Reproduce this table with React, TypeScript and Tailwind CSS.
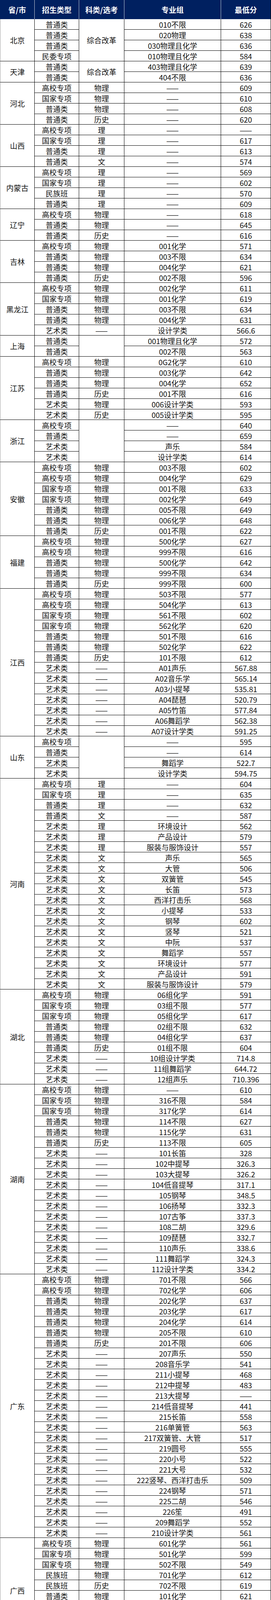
import React from 'react';

type Group = { p: string; merged?: string; rows: string[] };

// rows: "type|subject|group|score" or, when the subject column is merged, "type|group|score"
const data: Group[] = [
  { p: '北京', merged: '综合改革', rows: ['普通类|010不限|626', '普通类|020物理|638', '普通类|030物理且化学|636', '民委专项|010物理且化学|584'] },
  { p: '天津', merged: '综合改革', rows: ['普通类|403物理且化学|639', '普通类|404不限|636'] },
  { p: '河北', rows: ['高校专项|物理|——|609', '国家专项|物理|——|610', '普通类|物理|——|608', '普通类|历史|——|620'] },
  { p: '山西', rows: ['高校专项|理|——|——', '国家专项|理|——|617', '普通类|理|——|613', '普通类|文|——|574'] },
  { p: '内蒙古', rows: ['高校专项|理|——|569', '国家专项|理|——|602', '民族班|理|——|570', '普通类|理|——|609'] },
  { p: '辽宁', rows: ['高校专项|物理|——|618', '普通类|物理|——|645', '普通类|历史|——|616'] },
  { p: '吉林', rows: ['高校专项|物理|001化学|571', '普通类|物理|003不限|634', '普通类|物理|004化学|621', '普通类|历史|002不限|596'] },
  { p: '黑龙江', rows: ['高校专项|物理|002化学|611', '国家专项|物理|001化学|619', '普通类|物理|003不限|634', '普通类|物理|004化学|631', '艺术类|——|设计学类|566.6'] },
  { p: '上海', merged: '', rows: ['普通类|001物理且化学|572', '普通类|002不限|563'] },
  { p: '江苏', rows: ['高校专项|物理|0G2化学|610', '普通类|物理|003化学|642', '普通类|物理|004化学|652', '普通类|历史|001不限|616', '艺术类|物理|006设计学类|593', '艺术类|历史|005设计学类|595'] },
  { p: '浙江', merged: '', rows: ['高校专项|——|640', '普通类|——|659', '艺术类|声乐|584', '艺术类|设计学类|614'] },
  { p: '安徽', rows: ['高校专项|物理|003不限|602', '高校专项|物理|004化学|629', '国家专项|物理|001不限|633', '国家专项|物理|002化学|649', '普通类|物理|005不限|649', '普通类|物理|006化学|648', '普通类|历史|001不限|622'] },
  { p: '福建', rows: ['高校专项|物理|500化学|627', '高校专项|物理|999不限|616', '普通类|物理|500化学|642', '普通类|物理|999不限|634', '普通类|历史|999不限|600'] },
  {
    p: '江西',
    rows: [
      '高校专项|物理|503不限|577', '高校专项|物理|504化学|613', '国家专项|物理|561不限|602', '国家专项|物理|562化学|620',
      '普通类|物理|501不限|616', '普通类|物理|502化学|622', '普通类|历史|101不限|612',
      '艺术类|——|A01声乐|567.88', '艺术类|——|A02音乐学|565.14', '艺术类|——|A03小提琴|535.81', '艺术类|——|A04琵琶|520.79',
      '艺术类|——|A05竹笛|577.84', '艺术类|——|A06舞蹈学|562.38', '艺术类|——|A07设计学类|591.25',
    ],
  },
  { p: '山东', merged: '', rows: ['高校专项|——|595', '普通类|——|614', '艺术类|舞蹈学|522.7', '艺术类|设计学类|594.75'] },
  {
    p: '河南',
    rows: [
      '高校专项|理|——|604', '国家专项|理|——|635', '普通类|理|——|632', '普通类|文|——|587',
      '艺术类|理|环境设计|562', '艺术类|理|产品设计|579', '艺术类|理|服装与服饰设计|557',
      '艺术类|文|声乐|565', '艺术类|文|大管|506', '艺术类|文|双簧管|545', '艺术类|文|长笛|573', '艺术类|文|西洋打击乐|568',
      '艺术类|文|小提琴|533', '艺术类|文|钢琴|602', '艺术类|文|竖琴|521', '艺术类|文|中阮|537', '艺术类|文|舞蹈学|557',
      '艺术类|文|环境设计|577', '艺术类|文|产品设计|591', '艺术类|文|服装与服饰设计|579',
    ],
  },
  {
    p: '湖北',
    rows: [
      '高校专项|物理|06组化学|591', '国家专项|物理|03组不限|577', '国家专项|物理|05组化学|617', '普通类|物理|02组不限|632',
      '普通类|物理|04组化学|637', '普通类|历史|01组不限|604', '艺术类|——|10组设计学类|714.8', '艺术类|——|11组舞蹈学|644.72',
      '艺术类|——|12组声乐|710.396',
    ],
  },
  {
    p: '湖南',
    rows: [
      '高校专项|物理|——|610', '国家专项|物理|316不限|584', '国家专项|物理|317化学|614', '普通类|物理|114不限|627',
      '普通类|物理|115化学|631', '普通类|历史|113不限|605', '艺术类|——|101长笛|328', '艺术类|——|102中提琴|326.3',
      '艺术类|——|103大提琴|326.2', '艺术类|——|104低音提琴|317.1', '艺术类|——|105钢琴|348.5', '艺术类|——|106扬琴|332.3',
      '艺术类|——|107古筝|337.3', '艺术类|——|108二胡|329.6', '艺术类|——|109琵琶|332.7', '艺术类|——|110声乐|338.6',
      '艺术类|——|111舞蹈学|324.3', '艺术类|——|112设计学类|334.2',
    ],
  },
  {
    p: '广东',
    rows: [
      '高校专项|物理|701不限|566', '高校专项|物理|702化学|606', '普通类|物理|202化学|637', '普通类|物理|203化学|617',
      '普通类|物理|204化学|614', '普通类|物理|205不限|610', '普通类|历史|201不限|606',
      '艺术类|——|207声乐|550', '艺术类|——|208音乐学|541', '艺术类|——|211小提琴|468', '艺术类|——|212中提琴|483',
      '艺术类|——|213大提琴|——', '艺术类|——|214低音提琴|441', '艺术类|——|215长笛|558', '艺术类|——|216单簧管|563',
      '艺术类|——|217双簧管、大管|517', '艺术类|——|219圆号|555', '艺术类|——|220小号|522', '艺术类|——|221大号|532',
      '艺术类|——|222竖琴、西洋打击乐|509', '艺术类|——|224钢琴|571', '艺术类|——|225二胡|546', '艺术类|——|226笙|491',
      '艺术类|——|209舞蹈学|552', '艺术类|——|210设计学类|561',
    ],
  },
  {
    p: '广西',
    rows: [
      '高校专项|物理|601化学|561', '国家专项|物理|501化学|599', '国家专项|物理|502不限|549', '民族班|物理|701化学|612',
      '民族班|历史|702不限|619', '普通类|物理|101化学|621', '普通类|物理|102不限|611', '普通类|历史|103不限|608',
      '艺术类|物理|201设计学类|593', '艺术类|历史|202舞蹈学|521',
    ],
  },
  {
    p: '海南',
    merged: '综合改革',
    rows: ['高校专项|007化学|659', '国家专项|002物理且化学|675', '普通类|003不限|731', '普通类|004物理|733', '普通类|005物理且化学|718', '艺术类|001舞蹈学|349.6'],
  },
  { p: '重庆', rows: ['高校专项|物理|——|623', '国家专项|物理|——|617', '普通类|物理|——|629', '普通类|历史|——|599', '艺术类|——|声乐|218.32', '艺术类|——|舞蹈学|211.72'] },
  { p: '四川', rows: ['高校专项|理|——|615', '国家专项|理|——|632', '民族班|理|——|623', '普通类|理|——|647', '普通类|文|——|595', '艺术类|文|音乐学|526.85', '艺术类|理|设计学类|609.35'] },
  { p: '贵州', rows: ['高校专项|物理|——|595', '国家专项|物理|——|598', '民族班|物理|——|631', '民族班|历史|——|597', '普通类|物理|——|622', '普通类|历史|——|600'] },
  { p: '云南', rows: ['高校专项|理|——|570', '国家专项|理|——|620', '民族班|理|——|613', '普通类|理|——|625'] },
  { p: '陕西', rows: ['高校专项|理|——|572', '国家专项|理|——|540', '普通类|理|——|625', '普通类|文|——|581'] },
  {
    p: '甘肃',
    rows: [
      '高校专项|物理|002化学|584', '国家专项|物理|006不限|546', '国家专项|物理|008化学|584', '民族班|物理|009化学|604',
      '普通类|物理|004不限|628', '普通类|物理|005化学|628', '普通类|历史|003不限|595', '艺术类|——|010中提琴|542.25',
      '艺术类|——|011长号|467.25', '艺术类|——|012舞蹈学|521.5',
    ],
  },
  { p: '青海', rows: ['高校专项|理|——|416', '国家专项|理|——|505', '民族班|理|——|——', '普通类|理|——|539', '普通类|文|——|487'] },
  { p: '宁夏', rows: ['高校专项|理|——|483', '国家专项|理|——|502', '民族班|理|——|398', '普通类|理|——|432'] },
  { p: '新疆', rows: ['高校专项|理|——|507', '国家专项|理|——|524', '南疆单列|理|——|482', '民族班|理|——|454', '民族班|文|——|462', '普通类|理|——|555'] },
  { p: '西藏', merged: '民文/汉文', rows: ['国家专项|——|424', '普通类|——|429/579'] },
];

const cell = 'flex items-center justify-center border-r border-b border-black leading-none whitespace-nowrap overflow-hidden';
const head = 'flex items-center justify-center border-r border-[#c8cbd6] font-bold text-white leading-none';

const App: React.FC = () => {
  return (
    <div className="w-[695px] bg-white font-['Noto_Sans_CJK_SC','Noto_Sans',sans-serif] text-[19px] text-[#111]">
      {/* header */}
      <div className="grid h-[49px] grid-cols-[89px_114px_116px_248px_128px] bg-[#002060]">
        <div className={head}>省/市</div>
        <div className={head}>招生类型</div>
        <div className={head}>科类/选考</div>
        <div className={head}>专业组</div>
        <div className={head + ' border-r-black'}>最低分</div>
      </div>

      {/* body */}
      <div className="grid auto-rows-[27px] grid-cols-[89px_114px_116px_248px_128px]">
        {data.map((g) => {
          const n = g.rows.length;
          const merged = g.merged !== undefined;
          return (
            <React.Fragment key={g.p}>
              {g.rows.map((line, i) => {
                const r = line.split('|');
                return (
                  <React.Fragment key={g.p + i}>
                    {i === 0 && (
                      <div className={cell + ' col-start-1 border-l border-l-[#9a9a9a]'} style={{ gridRow: `span ${n}` }}>
                        {g.p}
                      </div>
                    )}
                    <div className={cell + ' col-start-2'}>{r[0]}</div>
                    {merged ? (
                      i === 0 && (
                        <div className={cell + ' col-start-3'} style={{ gridRow: `span ${n}` }}>
                          {g.merged}
                        </div>
                      )
                    ) : (
                      <div className={cell + ' col-start-3'}>{r[1]}</div>
                    )}
                    <div className={cell + ' col-start-4'}>{merged ? r[1] : r[2]}</div>
                    <div className={cell + ' col-start-5'}>{merged ? r[2] : r[3]}</div>
                  </React.Fragment>
                );
              })}
            </React.Fragment>
          );
        })}
      </div>

      {/* note */}
      <div className="flex h-[94px] flex-col items-center justify-center border-r border-b border-l border-black border-l-[#9a9a9a] text-center leading-[26px]">
        <p>注：以上国家专项、民族班、普通类数据为第一次投档情况。2025年招生专业及</p>
        <p>分组有较大变化，往年录取数据仅供了解。</p>
      </div>
    </div>
  );
};

export default App;
